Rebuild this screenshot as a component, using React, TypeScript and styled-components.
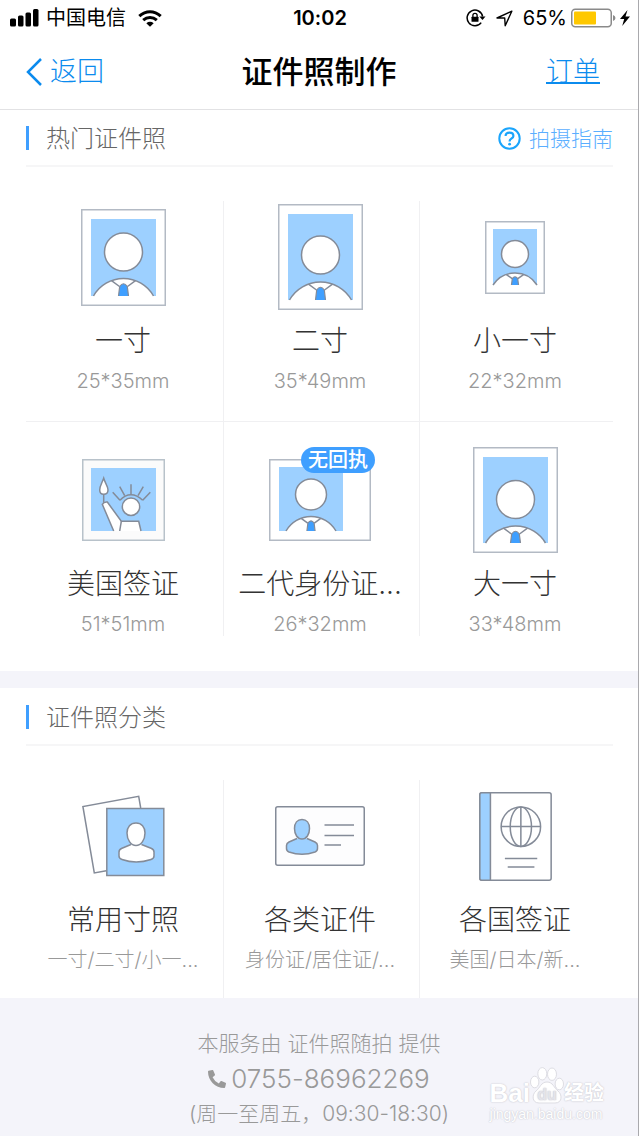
import React from 'react';
import styled, { createGlobalStyle } from 'styled-components';
import { FaPhoneAlt } from 'react-icons/fa';

const LINE = '#f0f0f2';
const STROKE = '#848b98';
const SKY = '#9dd0ff';
const ACCENT = '#3f9fff';
const LINK = '#0b8bee';

const GlobalStyle = createGlobalStyle`
  *, *::before, *::after { box-sizing: border-box; }
  body {
    margin: 0;
    background: #f4f4fa;
    font-family: Inter, "Noto Sans CJK SC", sans-serif;
    font-feature-settings: "calt" 0;
    font-weight: 300;
    color: #333;
  }
  h1, h2, p, ul { margin: 0; padding: 0; font-weight: inherit; }
  ul { list-style: none; }
  svg { display: block; flex: none; }
`;

const Page = styled.div`
  border-right: 1px solid #a9a9ad;
  background: #f4f4fa;
  min-height: 100vh;
  display: flex;
  flex-direction: column;
`;

/* ---------- status bar ---------- */

const StatusBar = styled.div`
  display: grid;
  grid-template-columns: 1fr auto 1fr;
  align-items: center;
  height: 36px;
  padding: 0 8px 0 10px;
  background: #fff;
  color: #000;
  font-size: 20px;
  line-height: 28px;
  font-weight: 400;
`;

const StatusGroup = styled.div<{ $end?: boolean; $gap: number }>`
  display: flex;
  align-items: center;
  justify-content: ${(p) => (p.$end ? 'flex-end' : 'flex-start')};
  gap: ${(p) => p.$gap}px;
  white-space: nowrap;
`;

const Clock = styled.time`
  font-weight: 600;
`;

const Carrier = styled.span`
  margin-right: 5px;
`;

/* ---------- navigation bar ---------- */

const NavBar = styled.header`
  display: grid;
  grid-template-columns: 1fr auto 1fr;
  align-items: center;
  height: 74px;
  padding: 0 38px 2px 26px;
  background: #fff;
  border-bottom: 1px solid #e2e2e4;
`;

const BackButton = styled.button`
  display: flex;
  align-items: center;
  gap: 8px;
  justify-self: start;
  padding: 0;
  border: 0;
  background: none;
  color: ${LINK};
  font: inherit;
  font-size: 27px;
  line-height: 40px;
`;

const NavTitle = styled.h1`
  font-size: 31px;
  line-height: 40px;
  font-weight: 500;
  color: #000;
  margin-left: 12px;
`;

const OrderLink = styled.a`
  justify-self: end;
  color: ${LINK};
  font-size: 27px;
  line-height: 40px;
  text-decoration: underline;
  text-decoration-thickness: 2px;
  text-underline-offset: 1px;
`;

/* ---------- sections ---------- */

const Section = styled.section<{ $top: number; $bottom: number }>`
  background: #fff;
  padding: ${(p) => p.$top}px 25px ${(p) => p.$bottom}px 26px;
`;

const Gap = styled.div`
  height: 17px;
`;

const SectionHead = styled.div`
  display: flex;
  align-items: center;
  justify-content: space-between;
  height: 57px;
  border-bottom: 2px solid #f6f6f7;
  margin-bottom: 34px;
`;

const SectionTitle = styled.h2`
  display: flex;
  align-items: center;
  gap: 17px;
  font-size: 24px;
  line-height: 32px;
  color: #666;

  &::before {
    content: '';
    width: 3px;
    height: 24px;
    background: ${ACCENT};
  }
`;

const SectionLabel = styled.span`
  padding-top: 2px;
`;

const GuideLink = styled.a`
  display: flex;
  align-items: center;
  gap: 8px;
  font-size: 21px;
  line-height: 28px;
  color: #5aaeff;
  text-decoration: none;
  padding-top: 2px;
`;

const Grid = styled.ul`
  display: grid;
  grid-template-columns: 198fr 196fr 193fr;
`;

const Cell = styled.li<{ $top: number; $bottom: number; $divided?: boolean }>`
  padding: ${(p) => p.$top}px 3px ${(p) => p.$bottom}px 0;
  border-bottom: ${(p) => (p.$divided ? `1px solid ${LINE}` : '0')};

  &:not(:nth-child(3n)) {
    border-right: 1px solid ${LINE};
  }
`;

const CellButton = styled.button`
  display: flex;
  flex-direction: column;
  align-items: center;
  width: 100%;
  padding: 0;
  border: 0;
  background: none;
  color: inherit;
  font: inherit;
  font-feature-settings: inherit;
  white-space: nowrap;
`;

const Picture = styled.span`
  position: relative;
  display: flex;
  align-items: center;
  justify-content: center;
  height: 112px;
`;

const Badge = styled.span`
  position: absolute;
  top: 3px;
  right: -4px;
  padding: 0 7px;
  border-radius: 13px;
  background: ${ACCENT};
  color: #fff;
  font-size: 20px;
  line-height: 26px;
  font-weight: 500;
`;

const CellTitle = styled.span`
  margin-top: 8px;
  font-size: 28px;
  line-height: 40px;
  color: #333;
`;

const CellNote = styled.span`
  margin-top: 8px;
  font-size: 20px;
  line-height: 24px;
  color: #999;
`;

/* ---------- footer ---------- */

const Footer = styled.footer`
  position: relative;
  display: flex;
  flex-direction: column;
  align-items: center;
  padding-top: 28px;
  color: #999;
  font-size: 21px;
  line-height: 36px;
`;

const PhoneLink = styled.a`
  display: flex;
  align-items: center;
  gap: 5px;
  color: inherit;
  font-size: 26px;
  line-height: 34px;
  text-decoration: none;
`;

const Watermark = styled.div`
  position: absolute;
  right: 34px;
  bottom: 8px;
  color: #fff;
  font-family: "Liberation Sans", "Noto Sans CJK SC", sans-serif;
  font-weight: 700;
  text-shadow: 0 0 1px #c9c9d1, 0 0 2px #cfcfd6;
`;

const WatermarkBrand = styled.div`
  display: flex;
  align-items: flex-end;
  font-size: 26px;
  line-height: 22px;
`;

const WatermarkWord = styled.span`
  font-size: 20px;
`;

const WatermarkUrl = styled.div`
  font-size: 14px;
  line-height: 20px;
  font-weight: 400;
`;

/* ---------- drawings ---------- */

type PhotoProps = {
  w: number;
  h: number;
  ix: number;
  iy: number;
  iw: number;
  ih: number;
  headY: number;
  r: number;
  apex: number;
  half: number;
};

function Photo({ w, h, ix, iy, iw, ih, headY, r, apex, half }: PhotoProps) {
  const cx = ix + iw / 2;
  const base = iy + ih;
  const drop = base - apex;
  const arc = (half * half + drop * drop) / (2 * drop);
  const k = r / 19;
  return (
    <svg width={w} height={h} viewBox={`0 0 ${w} ${h}`} fill="none" stroke={STROKE} strokeWidth="1.5">
      <rect x="0.75" y="0.75" width={w - 1.5} height={h - 1.5} fill="#fff" stroke="#b3bac4" />
      <rect x={ix} y={iy} width={iw} height={ih} fill={SKY} stroke="none" />
      <circle cx={cx} cy={headY} r={r} fill="#fff" />
      <path d={`M${cx - half} ${base}A${arc} ${arc} 0 0 1 ${cx + half} ${base}`} fill="#fff" />
      <path
        d={`M${cx - 12 * k} ${apex + 2.2 * k}L${cx - 4 * k} ${apex + 8 * k}M${cx + 12 * k} ${apex + 2.2 * k}L${cx + 4 * k} ${apex + 8 * k}`}
      />
      <path
        d={`M${cx - 5 * k} ${base}L${cx - 3.8 * k} ${apex + 8 * k}Q${cx} ${apex + 2.5 * k} ${cx + 3.8 * k} ${apex + 8 * k}L${cx + 5 * k} ${base}`}
        fill={ACCENT}
        strokeWidth="1.2"
      />
    </svg>
  );
}

const Statue = () => (
  <svg width="83" height="82" viewBox="0 0 83 82" fill="none" stroke={STROKE} strokeWidth="1.5">
    <rect x="0.75" y="0.75" width="81.500" height="80.500" fill="#fbfbfb" stroke="#b8c2ca" />
    <rect x="9" y="9" width="65" height="63" fill={SKY} stroke="none" />
    <path d="M21.700 19.300C20 24 17.700 27 17.700 31Q17.700 35.300 21.700 35.300Q26 35.300 26 31C26 27 23 24 21.700 19.300Z" fill="#fff" />
    <path d="M21.700 35.300V44" />
    <path d="M31.700 72L20.300 45.300Q22 42.500 25.300 43L39.300 62.300H56.700L59 72" fill="#fff" />
    <path d="M37.700 72L39.300 62.300" />
    <circle cx="49" cy="47.700" r="8.700" fill="#fff" />
    <path d="M38 41.300Q43 35.700 49 35.700T60.700 41.300" />
    <path d="M30.700 33.300L38 41.300M37.700 27.700L42.700 36.700M49 25.300V35.300M61.300 27.700L56 36.700M68.300 33.300L60.700 41.300" />
  </svg>
);

const PhotosIcon = () => (
  <svg width="83" height="82" viewBox="0 0 83 82" fill="none" stroke={STROKE} strokeWidth="1.5">
    <path d="M58.700 13L56.700 1.300L0.900 11.500L12.300 78L24.300 75.800" fill="#fff" />
    <rect x="24.800" y="13.500" width="57" height="67" fill={SKY} />
    <path
      d="M49 49.500L40 53.200Q37 54.500 37 57V61Q37 63.500 40 64.500Q54 69.500 69 64.500Q72 63.500 72 61V57Q72 54.500 69 53.200L59.500 49.500"
      fill="#fff"
    />
    <path d="M54 28C48.500 28 45 32 45 38C45 45 49 50.500 54 50.500S63 45 63 38C63 32 59.500 28 54 28Z" fill="#fff" />
  </svg>
);

const CardIcon = () => (
  <svg width="90" height="60" viewBox="0 0 90 60" fill="none" stroke={STROKE} strokeWidth="1.500">
    <rect x="0.75" y="0.75" width="88.500" height="58.500" rx="2" fill="#fdfdfe" />
    <path
      d="M22 32.500L14 36Q11.500 37.200 11.500 39.500V42.500Q11.500 45 14 46Q27 50.500 40 46Q42.500 45 42.500 42.500V39.500Q42.500 37.200 40 36L32 32.500"
      fill={SKY}
    />
    <path d="M27 13.500C22.300 13.500 19.500 17 19.500 22.500C19.500 28.500 22.500 33 27 33S34.500 28.500 34.500 22.500C34.500 17 31.700 13.500 27 13.500Z" fill={SKY} />
    <path d="M49.500 19H79M49.500 29.500H79M49.500 39H66" />
  </svg>
);

const PassportIcon = () => (
  <svg width="73" height="89" viewBox="0 0 72 88" fill="none" stroke={STROKE} strokeWidth="1.500">
    <rect x="0.75" y="0.75" width="70.500" height="86.500" rx="2" fill="#fff" />
    <path d="M11.200 0.75V87.250H2.750Q0.750 87.250 0.750 85.250V2.750Q0.750 0.750 2.750 0.750Z" fill={SKY} />
    <circle cx="41.300" cy="34.300" r="19.500" />
    <ellipse cx="41.300" cy="34.300" rx="10.500" ry="19.500" />
    <path d="M41.300 14.800V53.800M21.800 34H60.800M25.500 65.800H57.500M28.300 74.200H54.700" />
  </svg>
);

const SignalIcon = () => (
  <svg width="29" height="18" viewBox="0 0 29 18" fill="#000">
    <rect x="0" y="9.500" width="6" height="8" rx="1.500" />
    <rect x="8" y="6.500" width="5.500" height="11" rx="1.500" />
    <rect x="15.500" y="3.500" width="5.500" height="14" rx="1.500" />
    <rect x="23" y="0" width="5.500" height="17.500" rx="1.500" />
  </svg>
);

const WifiIcon = () => (
  <svg width="24" height="17" viewBox="0 0 24 17" fill="none" stroke="#000" strokeWidth="3">
    <path d="M1.300 6.200Q6.200 1.700 12 1.700T22.700 6.200" />
    <path d="M5.200 10.200Q8.200 7.500 12 7.500T18.800 10.200" />
    <path d="M12 16.700L8.300 13.200Q12 10.300 15.700 13.200Z" fill="#000" stroke="none" />
  </svg>
);

const RotationLockIcon = () => (
  <svg width="20" height="18" viewBox="0 0 20 18" fill="none" stroke="#000" strokeWidth="1.500">
    <path d="M15.200 13.600A7.800 7.800 0 1 1 16.600 7.500" />
    <path d="M13.300 7.500H19.500L16.500 11Z" fill="#000" stroke="none" />
    <rect x="5.500" y="7.800" width="7" height="5" rx="0.500" fill="#000" stroke="none" />
    <path d="M6.900 8V6.300Q6.900 4.300 9 4.300T11.100 6.300V8" strokeWidth="1.300" />
  </svg>
);

const LocationIcon = () => (
  <svg width="17" height="17" viewBox="0 0 17 17" fill="none" stroke="#000" strokeWidth="1.400" strokeLinejoin="round">
    <path d="M15.800 1.200L1 8H8.700L9.200 15.800Z" />
  </svg>
);

const BatteryIcon = () => (
  <svg width="45" height="20" viewBox="0 0 45 20" fill="none">
    <rect x="0.750" y="1.250" width="39.500" height="17.500" rx="3.500" stroke="#8a8a8a" strokeWidth="1.500" />
    <rect x="3" y="3.500" width="22" height="13" rx="1" fill="#ffc800" />
    <path d="M42 7Q44.500 8 44.500 10T42 13Z" fill="#8a8a8a" />
  </svg>
);

const BoltIcon = () => (
  <svg width="10" height="16" viewBox="0 0 10 16" fill="#000">
    <path d="M7.500 0L0 9H4.200L2.200 16L10 6.500H5.500Z" />
  </svg>
);

const BackIcon = () => (
  <svg width="16" height="28" viewBox="0 0 16 28" fill="none" stroke={LINK} strokeWidth="2.500">
    <path d="M15 1L2 14L15 27" />
  </svg>
);

const HelpIcon = () => (
  <svg width="23" height="23" viewBox="0 0 23 23" fill="none" stroke="#1ba5fc" strokeWidth="2">
    <circle cx="11.500" cy="11.500" r="10.200" />
    <path d="M7.600 9Q7.600 5.600 11.500 5.600T15.400 8.900Q15.400 10.500 13.500 11.500T11.600 14.500" strokeWidth="2.200" />
    <circle cx="11.600" cy="17.200" r="1.400" fill="#1ba5fc" stroke="none" />
  </svg>
);

const PawIcon = () => (
  <svg width="34" height="37" viewBox="0 0 34 37" fill="#fff" stroke="#dddde3" strokeWidth="1">
    <ellipse cx="4.700" cy="15" rx="4.200" ry="5.800" />
    <ellipse cx="12.300" cy="6.800" rx="4.500" ry="6.200" />
    <ellipse cx="22" cy="7.200" rx="4.500" ry="6.200" />
    <ellipse cx="29.300" cy="17" rx="4.200" ry="5.800" />
    <path d="M17 15C11 15 10 21 6 24C2 27 1.500 36 9 36H25C33 36 32 27 28 24C24 21 23 15 17 15Z" />
    <text
      x="17"
      y="33"
      textAnchor="middle"
      fontFamily="Liberation Sans, sans-serif"
      fontSize="16"
      fontWeight="700"
      fill="#e4e4ea"
      stroke="none"
    >
      du
    </text>
  </svg>
);

/* ---------- data ---------- */

type Item = { title: string; note: string; picture: React.ReactNode; badge?: string };

const popular: Item[] = [
  {
    title: '一寸',
    note: '25*35mm',
    picture: <Photo w={85} h={97} ix={10} iy={10} iw={65} ih={77} headY={43} r={19} apex={69.500} half={30} />,
  },
  {
    title: '二寸',
    note: '35*49mm',
    picture: <Photo w={85} h={106} ix={10} iy={10} iw={65} ih={86} headY={51} r={19} apex={78} half={31} />,
  },
  {
    title: '小一寸',
    note: '22*32mm',
    picture: <Photo w={60} h={73} ix={8} iy={8} iw={44} ih={56} headY={33} r={13.5} apex={52} half={22} />,
  },
  { title: '美国签证', note: '51*51mm', picture: <Statue /> },
  {
    title: '二代身份证...',
    note: '26*32mm',
    badge: '无回执',
    picture: <Photo w={102} h={82} ix={10} iy={8} iw={64} ih={64} headY={35.5} r={15.5} apex={57.500} half={25} />,
  },
  {
    title: '大一寸',
    note: '33*48mm',
    picture: <Photo w={85} h={106} ix={10} iy={10} iw={65} ih={86} headY={52.5} r={19} apex={79} half={30} />,
  },
];

const categories: Item[] = [
  { title: '常用寸照', note: '一寸/二寸/小一...', picture: <PhotosIcon /> },
  { title: '各类证件', note: '身份证/居住证/...', picture: <CardIcon /> },
  { title: '各国签证', note: '美国/日本/新...', picture: <PassportIcon /> },
];

function CellContent({ item }: { item: Item }) {
  return (
    <CellButton type="button">
      <Picture>
        {item.picture}
        {item.badge && <Badge>{item.badge}</Badge>}
      </Picture>
      <CellTitle>{item.title}</CellTitle>
      <CellNote>{item.note}</CellNote>
    </CellButton>
  );
}

export default function App() {
  return (
    <Page lang="zh-CN">
      <GlobalStyle />
      <StatusBar>
        <StatusGroup $gap={7}>
          <SignalIcon />
          <Carrier>中国电信</Carrier>
          <WifiIcon />
        </StatusGroup>
        <Clock>10:02</Clock>
        <StatusGroup $end $gap={4}>
          <StatusGroup $gap={10}>
            <RotationLockIcon />
            <LocationIcon />
            <span>65%</span>
          </StatusGroup>
          <BatteryIcon />
          <BoltIcon />
        </StatusGroup>
      </StatusBar>

      <NavBar>
        <BackButton type="button">
          <BackIcon />
          返回
        </BackButton>
        <NavTitle>证件照制作</NavTitle>
        <OrderLink href="#orders">订单</OrderLink>
      </NavBar>

      <Section $top={0} $bottom={35}>
        <SectionHead>
          <SectionTitle>
            <SectionLabel>热门证件照</SectionLabel>
          </SectionTitle>
          <GuideLink href="#guide">
            <HelpIcon />
            拍摄指南
          </GuideLink>
        </SectionHead>
        <Grid>
          {popular.map((item, i) => (
            <Cell key={item.title} $top={i < 3 ? 0 : 22} $bottom={i < 3 ? 28 : 0} $divided={i < 3}>
              <CellContent item={item} />
            </Cell>
          ))}
        </Grid>
      </Section>

      <Gap />

      <Section $top={1} $bottom={0}>
        <SectionHead>
          <SectionTitle>
            <SectionLabel>证件照分类</SectionLabel>
          </SectionTitle>
        </SectionHead>
        <Grid>
          {categories.map((item) => (
            <Cell key={item.title} $top={0} $bottom={26}>
              <CellContent item={item} />
            </Cell>
          ))}
        </Grid>
      </Section>

      <Footer>
        <p>本服务由 证件照随拍 提供</p>
        <PhoneLink href="tel:0755-86962269">
          <FaPhoneAlt size={18} />
          0755-86962269
        </PhoneLink>
        <p>(周一至周五，09:30-18:30)</p>
        <Watermark>
          <WatermarkBrand>
            Bai
            <PawIcon />
            <WatermarkWord>经验</WatermarkWord>
          </WatermarkBrand>
          <WatermarkUrl>jingyan.baidu.com</WatermarkUrl>
        </Watermark>
      </Footer>
    </Page>
  );
}
